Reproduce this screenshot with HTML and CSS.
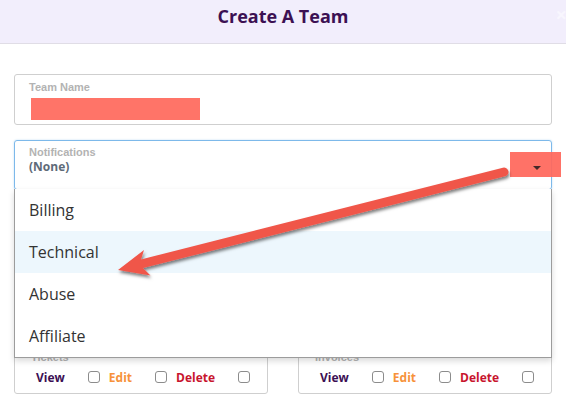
FILE: index.html
```html
<!DOCTYPE html>
<html>
<head>
<meta charset="utf-8">
<link rel="stylesheet" href="styles.css">
</head>
<body>
<div class="header">
  <h1 class="title">Create A Team</h1>
  <span class="close">&times;</span>
</div>
<div class="content">
  <div class="field">
    <div class="label">Team Name</div>
    <div class="redact"></div>
  </div>
  <div class="field notif">
    <div class="label">Notifications</div>
    <div class="value">(None)</div>
    <div class="redact-caret"></div>
    <div class="caret"></div>
    <ul class="menu">
      <li class="item">Billing</li>
      <li class="item active">Technical</li>
      <li class="item">Abuse</li>
      <li class="item">Affiliate</li>
    </ul>
  </div>
  <div class="perms">
    <div class="perm">
      <div class="label">Tickets</div>
      <div class="perm-row">
        <span class="view">View</span><span class="cb"></span>
        <span class="edit">Edit</span><span class="cb"></span>
        <span class="delete">Delete</span><span class="cb"></span>
      </div>
    </div>
    <div class="perm">
      <div class="label">Invoices</div>
      <div class="perm-row">
        <span class="view">View</span><span class="cb"></span>
        <span class="edit">Edit</span><span class="cb"></span>
        <span class="delete">Delete</span><span class="cb"></span>
      </div>
    </div>
  </div>
</div>
<svg class="arrow" width="566" height="404" viewBox="0 0 566 404">
  <defs>
    <filter id="sh" x="-10%" y="-30%" width="120%" height="160%">
      <feDropShadow dx="1" dy="2.5" stdDeviation="1.6" flood-color="#000" flood-opacity="0.5"/>
    </filter>
  </defs>
  <g filter="url(#sh)" fill="#f0564a">
    <line x1="504" y1="172" x2="141" y2="264" stroke="#f0564a" stroke-width="9" stroke-linecap="round"/>
    <polygon points="118,270 144,250 139.5,264.5 150.5,275.5"/>
  </g>
</svg>
</body>
</html>
```
FILE: styles.css
```css
* { box-sizing: border-box; }
body {
  margin: 0;
  width: 566px;
  height: 404px;
  overflow: hidden;
  position: relative;
  background: #fff;
  font-family: "Open Sans", "Liberation Sans", sans-serif;
}
.header {
  position: relative;
  height: 44px;
  background: #f2eefc;
  border-bottom: 1px solid #e0dde6;
  display: flex;
  justify-content: center;
}
.title {
  margin: 0;
  font-size: 18px;
  font-weight: 700;
  line-height: 33px;
  color: #3c1053;
}
.close {
  position: absolute;
  right: -1px;
  top: 3px;
  font-size: 20px;
  font-weight: 700;
  line-height: 24px;
  color: #f8f6fe;
}
.content {
  padding: 30px 14px 0;
}
.field {
  border: 1px solid #cfcfcf;
  border-radius: 3px;
  height: 51px;
  padding: 5px 14px 0;
}
.label {
  font-family: "Liberation Sans", Arial, sans-serif;
  font-size: 11px;
  font-weight: 700;
  line-height: 14px;
  color: #b3b3b3;
}
.redact {
  width: 169px;
  height: 22px;
  margin: 4px 0 0 2px;
  background: #ff7468;
}
.notif {
  position: relative;
  margin-top: 15px;
  height: 50px;
  padding-top: 4px;
  border-color: #7db9ea;
  box-shadow: 0 0 2px rgba(102, 175, 233, 0.45);
}
.value {
  font-size: 12px;
  font-weight: 700;
  line-height: 16px;
  color: #5e6a78;
}
.redact-caret {
  position: absolute;
  left: 495px;
  top: 11px;
  width: 51px;
  height: 25px;
  background: rgba(255, 103, 91, 0.93);
}
.caret {
  position: absolute;
  left: 518px;
  top: 25px;
  width: 0;
  height: 0;
  border-left: 4px solid transparent;
  border-right: 4px solid transparent;
  border-top: 4px solid #452828;
}
.menu {
  position: absolute;
  top: 48px;
  left: -1px;
  right: -1px;
  margin: 0;
  padding: 0;
  list-style: none;
  background: #fff;
  border: 1px solid #9c9c9c;
  border-top: none;
  box-shadow: 0 3px 6px rgba(0, 0, 0, 0.15);
  z-index: 5;
}
.item {
  height: 42px;
  line-height: 42px;
  padding-left: 14px;
  font-size: 16px;
  color: #333;
}
.item.active {
  background: #edf7fd;
}
.perms {
  display: flex;
  gap: 30px;
  margin-top: 155px;
}
.perm {
  flex: 1;
  border: 1px solid #cfcfcf;
  border-radius: 3px;
  padding: 4px 0 7px 16px;
}
.perm-row {
  display: flex;
  align-items: flex-start;
  margin-top: 6px;
  padding-left: 5px;
  font-size: 12px;
  font-weight: 700;
  line-height: 16px;
}
.perm-row span:not(.cb) {
  margin-right: 23px;
}
.view { color: #3c1053; }
.edit { color: #f7923a; }
.delete { color: #c8152e; }
.cb {
  width: 12px;
  height: 12px;
  margin-top: 1px;
  margin-right: 9px;
  border: 1px solid #8c8c8c;
  border-radius: 3px;
  background: #fff;
}
.arrow {
  position: absolute;
  left: 0;
  top: 0;
  z-index: 10;
  pointer-events: none;
}
```
